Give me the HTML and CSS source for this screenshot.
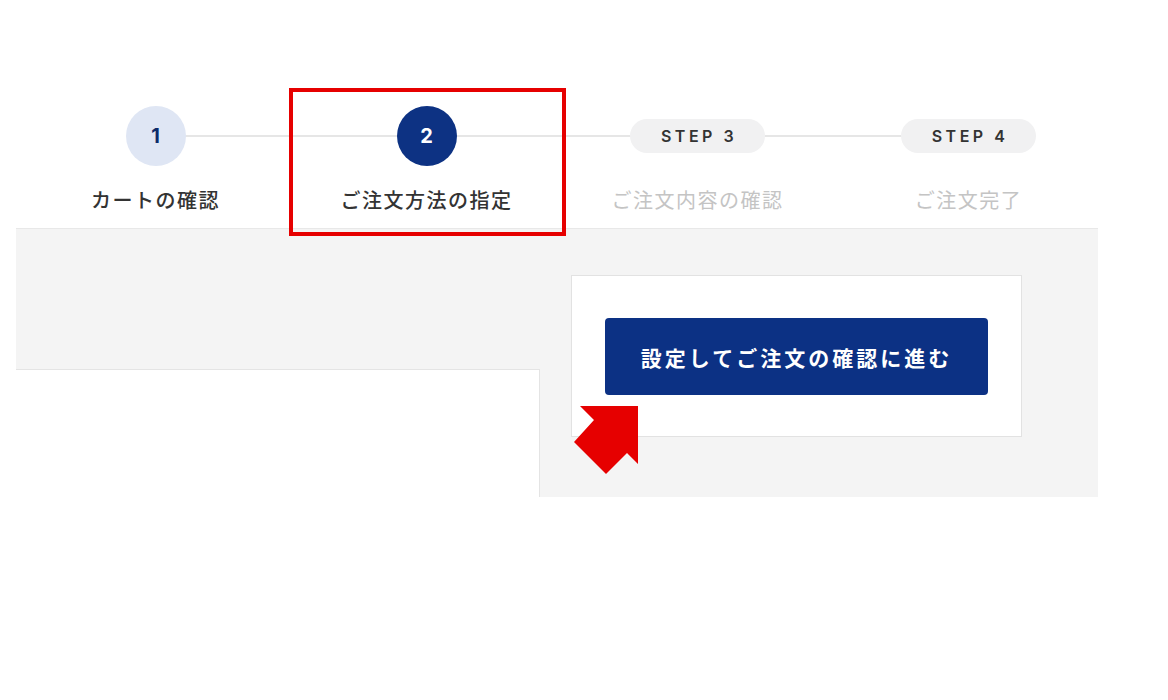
FILE: index.html
```html
<!DOCTYPE html>
<html lang="ja">
<head>
    <meta charset="UTF-8">
    <meta name="viewport" content="width=device-width, initial-scale=1.0">
    <title>ご注文方法の指定</title>
    <link rel="stylesheet" href="styles.css">
</head>
<body>
    <div class="page">
        <ol class="steps">
            <li class="step done">
                <span class="marker circle">1</span>
                <span class="label">カートの確認</span>
            </li>
            <li class="step current">
                <span class="marker circle">2</span>
                <span class="label">ご注文方法の指定</span>
            </li>
            <li class="step">
                <span class="marker pill">STEP 3</span>
                <span class="label">ご注文内容の確認</span>
            </li>
            <li class="step">
                <span class="marker pill">STEP 4</span>
                <span class="label">ご注文完了</span>
            </li>
        </ol>

        <div class="panel">
            <div class="panel-main"></div>
            <div class="panel-side">
                <div class="submit-box">
                    <button type="button" class="submit-btn">設定してご注文の確認に進む</button>
                </div>
            </div>
        </div>

        <!-- annotation overlays -->
        <div class="highlight"></div>
        <svg class="pointer" width="66" height="70" viewBox="0 0 66 70">
            <polygon points="64,0 6,0 20,14 0,36 32,68 53,47 64,58" fill="#e60000"/>
        </svg>
    </div>
</body>
</html>
```

FILE: styles.css
```css
body {
    margin: 0;
    background-color: #fff;
    font-family: "Noto Sans CJK JP", "Noto Sans", sans-serif;
    color: #333;
}
.page {
    position: relative;
    width: 1168px;
    height: 700px;
}
.steps {
    position: relative;
    list-style: none;
    margin: 0 0 0 20px;
    padding: 106px 0 0;
    width: 1084px;
    display: grid;
    grid-template-columns: repeat(4, 1fr);
}
.steps::before {
    content: "";
    position: absolute;
    top: 135px;
    left: 135px;
    right: 135px;
    height: 2px;
    background-color: #e6e6e6;
}
.step {
    position: relative;
    display: flex;
    flex-direction: column;
    align-items: center;
}
.marker {
    display: flex;
    align-items: center;
    justify-content: center;
    font-family: "Inter", "Liberation Sans", sans-serif;
    font-weight: 700;
}
.circle {
    width: 60px;
    height: 60px;
    border-radius: 50%;
    font-size: 20px;
}
.done .circle {
    background-color: #dfe6f4;
    color: #0d2a68;
}
.current .circle {
    background-color: #0d3283;
    color: #fff;
}
.pill {
    margin: 13px 0;
    width: 135px;
    height: 34px;
    border-radius: 17px;
    background-color: #f1f1f2;
    color: #333;
    font-size: 16px;
    font-weight: 600;
    letter-spacing: 3.5px;
    padding-left: 3px;
    box-sizing: border-box;
}
.label {
    margin-top: 20px;
    font-size: 20px;
    line-height: 28px;
    letter-spacing: 1.5px;
    color: #c4c4c4;
}
.done .label,
.current .label {
    color: #333;
    font-weight: 500;
}
.panel {
    display: flex;
    margin: 14px 0 0 16px;
    width: 1082px;
    background-color: #f4f4f4;
    border-top: 1px solid #e8e8e8;
}
.panel-main {
    flex: 0 0 523px;
    margin-top: 140px;
    background-color: #fff;
    border-top: 1px solid #e4e4e4;
    border-right: 1px solid #e4e4e4;
}
.panel-side {
    margin-left: 31px;
    padding: 46px 0 60px;
}
.submit-box {
    width: 451px;
    box-sizing: border-box;
    padding: 42px 33px 41px;
    background-color: #fff;
    border: 1px solid #e2e2e2;
}
.submit-btn {
    display: block;
    width: 100%;
    height: 77px;
    border: none;
    border-radius: 4px;
    background-color: #0c3184;
    color: #fff;
    font-family: "Noto Sans CJK JP", sans-serif;
    font-size: 21px;
    font-weight: 700;
    letter-spacing: 3px;
    cursor: pointer;
}
.highlight {
    position: absolute;
    left: 289px;
    top: 88px;
    width: 277px;
    height: 148px;
    box-sizing: border-box;
    border: 4px solid #e60000;
}
.pointer {
    position: absolute;
    left: 574px;
    top: 406px;
}
```
